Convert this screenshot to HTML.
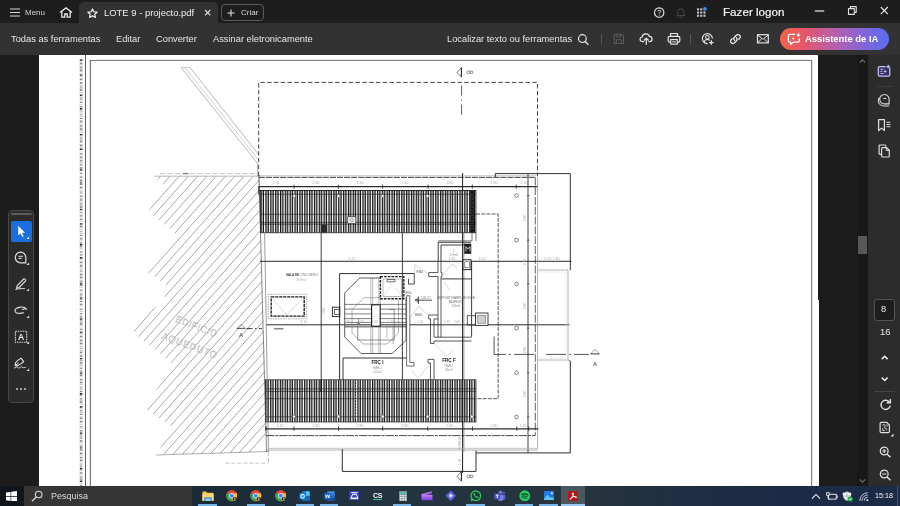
<!DOCTYPE html>
<html>
<head>
<meta charset="utf-8">
<title>LOTE 9 - projecto.pdf</title>
<style>
*{box-sizing:border-box;margin:0;padding:0}
html,body{width:900px;height:506px;overflow:hidden;background:#1c1c1c;font-family:"Liberation Sans",sans-serif;}
.abs{position:absolute}
#titlebar{position:absolute;left:0;top:0;width:900px;height:23px;background:#1d1d1d}
#tab{position:absolute;left:79px;top:2px;width:139px;height:22px;background:#323232;border-radius:5px 5px 0 0}
#toolbar{position:absolute;left:0;top:23px;width:900px;height:31.5px;background:#323232}
#toolshadow{display:none}
.t{position:absolute;color:#e6e6e6;white-space:nowrap;line-height:1;will-change:transform}
#page{position:absolute;left:38.5px;top:55px;width:779.2px;height:431px;background:#fff;overflow:hidden}
#scroll{position:absolute;left:857.400px;top:54.5px;width:10.600px;height:431.500px;background:#181818}
#thumb{position:absolute;left:858px;top:236px;width:9.400px;height:18.300px;background:#585858}
#rpanel{position:absolute;left:868px;top:54.5px;width:32px;height:431.500px;background:#2c2c2c}
#lpal{position:absolute;left:8.3px;top:209.600px;width:26px;height:193.400px;background:#2b2b2b;border:1px solid #474747;border-radius:4px}
#taskbar{position:absolute;left:0;top:486px;width:900px;height:20px;background:linear-gradient(90deg,#0f141b 0,#10161e 2.6%,#1c2a37 21.5%,#223240 40%,#26353d 64%,#1f2e42 76%,#1b2b47 88%,#1b2a46 100%)}
#search{position:absolute;left:24px;top:486px;width:168.300px;height:20px;background:#353535}
</style>
</head>
<body>
<div id="titlebar"></div>
<div id="tab"></div>
<div id="toolbar"></div>
<div id="toolshadow"></div>

<!-- title bar content -->
<svg class="abs" style="left:10px;top:8px" width="10" height="9" viewBox="0 0 10 9"><path d="M0 1h10M0 4.5h10M0 8h10" stroke="#d8d8d8" stroke-width="1.2"/></svg>
<div class="t" style="left:25px;top:8.5px;font-size:8px;color:#d2d2d2">Menu</div>
<svg class="abs" style="left:59px;top:7px" width="14" height="11" viewBox="0 0 14 11"><path d="M1 5.6 7 0.9l6 4.7M2.8 4.6v5.6h3V7h2.4v3.2h3V4.6" fill="none" stroke="#e8e8e8" stroke-width="1.3"/></svg>
<svg class="abs" style="left:87px;top:8px" width="11" height="10" viewBox="0 0 11 10"><path d="M5.5 0.9 6.9 3.8 10.1 4.2 7.8 6.3 8.4 9.4 5.5 7.9 2.6 9.4 3.2 6.3 0.9 4.2 4.1 3.8z" fill="none" stroke="#e8e8e8" stroke-width="1.2" stroke-linejoin="round"/></svg>
<div class="t" style="left:103.5px;top:7.5px;font-size:9.45px;color:#f0f0f0">LOTE 9 - projecto.pdf</div>
<svg class="abs" style="left:203.500px;top:9.300px" width="8" height="8" viewBox="0 0 8 8"><path d="M1 1l5.300 5.300M6.300 1l-5.300 5.300" stroke="#e0e0e0" stroke-width="1.100"/></svg>
<div class="abs" style="left:221px;top:4px;width:43px;height:17px;border:1px solid #5a5a5a;border-radius:4px;background:#1d1d1d"></div>
<svg class="abs" style="left:227px;top:8.5px" width="8" height="8" viewBox="0 0 8 8"><path d="M4 0.5v7M0.5 4h7" stroke="#e0e0e0" stroke-width="1.1"/></svg>
<div class="t" style="left:240.5px;top:8.5px;font-size:8px;color:#d8d8d8">Criar</div>
<div class="t" style="left:722.500px;top:5.900px;font-size:11.650px;color:#f2f2f2;-webkit-text-stroke:0.200px #f2f2f2">Fazer logon</div>

<!-- toolbar text -->
<div class="t" style="left:10.5px;top:34.8px;font-size:9.3px">Todas as ferramentas</div>
<div class="t" style="left:116px;top:34.8px;font-size:9.3px">Editar</div>
<div class="t" style="left:156px;top:34.8px;font-size:9.3px">Converter</div>
<div class="t" style="left:213px;top:34.8px;font-size:9.3px">Assinar eletronicamente</div>
<div class="t" style="left:446.5px;top:34.8px;font-size:9.3px">Localizar texto ou ferramentas</div>


<!-- title bar right -->
<svg class="abs" style="left:653px;top:7px" width="12" height="12" viewBox="0 0 12 12"><circle cx="6.2" cy="5.5" r="4.7" fill="none" stroke="#e4e4e4" stroke-width="1.15"/><path d="M4.9 4.5c0-1.7 2.7-1.7 2.7-.1 0 1-1.3 1-1.3 2.1" fill="none" stroke="#e4e4e4" stroke-width="1"/><circle cx="6.3" cy="8" r=".6" fill="#e4e4e4"/></svg>
<svg class="abs" style="left:675px;top:7px" width="12" height="12" viewBox="0 0 12 12"><path d="M2 8.6c1-1 1-2 1-3.6 0-2 1.300-3.300 2.900-3.300S8.800 3 8.800 5c0 1.600 0 2.600 1 3.600z" fill="none" stroke="#444444" stroke-width="1.1" stroke-linejoin="round"/><path d="M4.800 10.300h2.200" stroke="#444444" stroke-width="1.1"/></svg>
<svg class="abs" style="left:696px;top:7px" width="12" height="12" viewBox="0 0 12 12"><g fill="#c4c4c4"><rect x="1" y="1.300" width="2.100" height="2.100"/><rect x="4.200" y="1.300" width="2.100" height="2.100"/><rect x="1" y="4.500" width="2.100" height="2.100"/><rect x="4.200" y="4.500" width="2.100" height="2.100"/><rect x="7.400" y="4.500" width="2.100" height="2.100"/><rect x="1" y="7.700" width="2.100" height="2.100"/><rect x="4.200" y="7.700" width="2.100" height="2.100"/><rect x="7.400" y="7.700" width="2.100" height="2.100"/></g><circle cx="8.900" cy="1.900" r="1.900" fill="#3b8cf0"/></svg>
<svg class="abs" style="left:814px;top:9px" width="11" height="4" viewBox="0 0 11 4"><path d="M0.800 2h9.400" stroke="#e8e8e8" stroke-width="1.200"/></svg>
<svg class="abs" style="left:847px;top:5px" width="11" height="11" viewBox="0 0 11 11"><path d="M1.500 3.600h5.800v5.800h-5.800zM3.400 3.400v-1.800h5.800v5.800h-1.800" fill="none" stroke="#e0e0e0" stroke-width="1.100" stroke-linejoin="round"/></svg>
<svg class="abs" style="left:880px;top:6px" width="9" height="9" viewBox="0 0 9 9"><path d="M0.800 1l7 7.200M7.800 1l-7 7.200" stroke="#e8e8e8" stroke-width="1.150"/></svg>

<!-- toolbar right icons -->
<svg class="abs" style="left:577px;top:33px" width="13" height="13" viewBox="0 0 13 13"><circle cx="5.400" cy="5.600" r="3.900" fill="none" stroke="#e6e6e6" stroke-width="1.200"/><path d="M8.200 8.500l3.300 3.300" stroke="#e6e6e6" stroke-width="1.300"/></svg>
<div class="abs" style="left:601px;top:33.500px;width:1px;height:10px;background:#565656"></div>
<svg class="abs" style="left:613px;top:33px" width="12" height="12" viewBox="0 0 12 12"><path d="M1.200 1.200h7.300l2 2v7.300h-9.300z" fill="none" stroke="#5a5a5a" stroke-width="1.100" stroke-linejoin="round"/><path d="M3.300 1.400v2.600h4.200v-2.600M3.300 10.300v-3.600h5v3.600" fill="none" stroke="#5a5a5a" stroke-width="1"/></svg>
<svg class="abs" style="left:639px;top:32px" width="15" height="14" viewBox="0 0 15 14"><path d="M4.600 9.600h-1.200c-3.100-.2-3.100-4.300-.2-4.600.3-4 6.300-4.300 7.100-.7 3.600.1 3.600 5.100.3 5.300h-.6" fill="none" stroke="#e6e6e6" stroke-width="1.200" stroke-linecap="round"/><path d="M7.300 12.800v-6.300M4.900 8.500l2.400-2.400 2.400 2.400" fill="none" stroke="#e6e6e6" stroke-width="1.250"/></svg>
<svg class="abs" style="left:667px;top:32px" width="14" height="14" viewBox="0 0 14 14"><path d="M3.600 4.300v-2.800h6.800v2.800" fill="none" stroke="#e6e6e6" stroke-width="1.150"/><rect x="1.200" y="4.300" width="11.600" height="5.800" rx="1.300" fill="none" stroke="#e6e6e6" stroke-width="1.200"/><rect x="3.700" y="7.600" width="6.600" height="4.500" fill="#323232" stroke="#e6e6e6" stroke-width="1.150"/><path d="M5 9.900h4" stroke="#e6e6e6" stroke-width=".9"/></svg>
<div class="abs" style="left:690px;top:33.500px;width:1px;height:10px;background:#565656"></div>
<svg class="abs" style="left:701px;top:32px" width="14" height="14" viewBox="0 0 14 14"><path d="M11.400 6.600a5 5 0 1 0-4.800 5" fill="none" stroke="#e6e6e6" stroke-width="1.150"/><circle cx="6.400" cy="5.200" r="1.800" fill="none" stroke="#e6e6e6" stroke-width="1.050"/><path d="M3.300 10c.3-2 1.600-2.600 3.100-2.600 1 0 1.800.3 2.300.9" fill="none" stroke="#e6e6e6" stroke-width="1.050"/><path d="M10.300 8.300v4.400M8.100 10.500h4.400" stroke="#e6e6e6" stroke-width="1.250"/></svg>
<svg class="abs" style="left:729px;top:32px" width="13" height="14" viewBox="0 0 13 14"><g fill="none" stroke="#e6e6e6" stroke-width="1.300" stroke-linecap="round"><path d="M5.600 8.400c-1.300-1.300-.9-2.500 0-3.400l1.700-1.700c1-1 2.400-1 3.300-.1s.9 2.300-.1 3.300l-.9.900"/><path d="M7.300 5.600c1.300 1.300.9 2.500 0 3.400l-1.700 1.700c-1 1-2.400 1-3.300.1s-.9-2.300.1-3.300l.9-.9"/></g></svg>
<svg class="abs" style="left:756px;top:33px" width="14" height="12" viewBox="0 0 14 12"><rect x="1.500" y="1.700" width="10.800" height="8.200" fill="none" stroke="#e6e6e6" stroke-width="1.150"/><path d="M1.700 2l5.200 4.300 5.200-4.300M1.700 9.700l3.700-3.600M12.100 9.700l-3.700-3.600" fill="none" stroke="#e6e6e6" stroke-width="1"/></svg>
<div class="abs" style="left:780px;top:28px;width:109px;height:21.500px;border-radius:11px;background:linear-gradient(90deg,#f5634a 0%,#e4566a 22%,#b860ac 50%,#7f66dc 78%,#5a6cf2 100%)"></div>
<svg class="abs" style="left:787px;top:32px" width="15" height="14" viewBox="0 0 15 14"><path d="M8 2.400h-5.200c-.9 0-1.400.5-1.400 1.400v5c0 .9.500 1.400 1.400 1.400h.9v2.200l2.500-2.200h4.600c.9 0 1.400-.5 1.400-1.400v-2.500" fill="none" stroke="#fff" stroke-width="1.250" stroke-linejoin="round"/><path d="M11.400 0.600l.7 1.700 1.700.7-1.700.7-.7 1.700-.7-1.700-1.700-.7 1.700-.7z" fill="#fff"/><path d="M6.300 5l.5 1.100 1.100.5-1.100.5-.5 1.100-.5-1.100-1.100-.5 1.100-.5z" fill="#fff"/></svg>
<div class="t" style="left:804.700px;top:34.300px;font-size:9.450px;font-weight:bold;color:#fff">Assistente de IA</div>

<div id="page"></div>
<div class="abs" style="left:817px;top:300.200px;width:2px;height:185.800px;background:#fff"></div>
<!--DRAWING-START-->
<svg class="abs" style="left:0;top:0;will-change:transform" width="900" height="506" viewBox="0 0 900 506">
<defs>
<clipPath id="pgclip"><rect x="38.5" y="55" width="780.5" height="431"/></clipPath>
<pattern id="slat" width="4.85" height="10" patternUnits="userSpaceOnUse" x="260.6"><rect width="4.85" height="10" fill="#a2a2a2"/><rect x="0" width="1.15" height="10" fill="#111"/><rect x="2.5" width="0.5" height="10" fill="#3c3c3c"/><rect x="3.95" width="0.9" height="10" fill="#ececec"/></pattern>
<clipPath id="hclip"><path d="M154.5 176.5L164.0 185.0L148.5 211.5L176.0 234.0L144.5 269.5L168.0 286.0L163.0 302.0L133.0 323.0L134.0 333.0L173.0 364.0L144.5 408.0L173.0 427.5L156.0 455.0L268.0 451.5L258.3 176.5z"/></clipPath>
</defs>
<g clip-path="url(#pgclip)" fill="none" font-family="Liberation Sans, sans-serif">
<path d="M81.1 59.5L81.1 486.0" stroke="#cccccc" stroke-width="3.2" stroke-dasharray="1.300 0.800 0.900 1.200 1.700 0.700 0.600 1.500 2.100 0.900 1.100 1.300" />
<path d="M81.1 59.5L81.1 486.0" stroke="#8a8a8a" stroke-width="2.4" stroke-dasharray="0.900 2.300 1.300 3.100 0.800 1.900 1.500 4.300 0.700 2.700" />
<path d="M81.1 59.5L81.1 486.0" stroke="#333" stroke-width="2.4" stroke-dasharray="1.200 13.700 1.000 19.300 1.300 11.900 1.100 25.100" />
<path d="M85.5 55.0L85.5 486.0" stroke="#4a4a4a" stroke-width="0.9" />
<path d="M90.3 486.0L90.3 59.9" stroke="#4a4a4a" stroke-width="0.9" />
<path d="M89.9 60.4L812.1 60.4" stroke="#707070" stroke-width="1.0" />
<path d="M811.7 60.4L811.7 486.0" stroke="#5a5a5a" stroke-width="0.9" />
<path d="M85.5 60.4L90.3 60.4" stroke="#4a4a4a" stroke-width="0" />
<g clip-path="url(#hclip)">
<path d="M163.5 173.0L-138.6 513.2" stroke="#828282" stroke-width="0.7" />
<path d="M172.8 173.0L-129.3 513.2" stroke="#828282" stroke-width="0.7" />
<path d="M182.0 173.0L-120.0 513.2" stroke="#828282" stroke-width="0.7" />
<path d="M191.3 173.0L-110.8 513.2" stroke="#828282" stroke-width="0.7" />
<path d="M200.6 173.0L-101.5 513.2" stroke="#828282" stroke-width="0.7" />
<path d="M209.8 173.0L-92.3 513.2" stroke="#828282" stroke-width="0.7" />
<path d="M219.1 173.0L-83.0 513.2" stroke="#828282" stroke-width="0.7" />
<path d="M228.3 173.0L-73.7 513.2" stroke="#828282" stroke-width="0.7" />
<path d="M237.6 173.0L-64.5 513.2" stroke="#828282" stroke-width="0.7" />
<path d="M246.9 173.0L-55.2 513.2" stroke="#828282" stroke-width="0.7" />
<path d="M256.1 173.0L-46.0 513.2" stroke="#828282" stroke-width="0.7" />
<path d="M265.4 173.0L-36.7 513.2" stroke="#828282" stroke-width="0.7" />
<path d="M274.6 173.0L-27.4 513.2" stroke="#828282" stroke-width="0.7" />
<path d="M283.9 173.0L-18.2 513.2" stroke="#828282" stroke-width="0.7" />
<path d="M293.2 173.0L-8.9 513.2" stroke="#828282" stroke-width="0.7" />
<path d="M302.4 173.0L0.3 513.2" stroke="#828282" stroke-width="0.7" />
<path d="M311.7 173.0L9.6 513.2" stroke="#828282" stroke-width="0.7" />
<path d="M320.9 173.0L18.9 513.2" stroke="#828282" stroke-width="0.7" />
<path d="M330.2 173.0L28.1 513.2" stroke="#828282" stroke-width="0.7" />
<path d="M339.5 173.0L37.4 513.2" stroke="#828282" stroke-width="0.7" />
<path d="M348.7 173.0L46.6 513.2" stroke="#828282" stroke-width="0.7" />
<path d="M358.0 173.0L55.9 513.2" stroke="#828282" stroke-width="0.7" />
<path d="M367.2 173.0L65.2 513.2" stroke="#828282" stroke-width="0.7" />
<path d="M376.5 173.0L74.4 513.2" stroke="#828282" stroke-width="0.7" />
<path d="M385.8 173.0L83.7 513.2" stroke="#828282" stroke-width="0.7" />
<path d="M395.0 173.0L92.9 513.2" stroke="#828282" stroke-width="0.7" />
<path d="M404.3 173.0L102.2 513.2" stroke="#828282" stroke-width="0.7" />
<path d="M413.5 173.0L111.5 513.2" stroke="#828282" stroke-width="0.7" />
<path d="M422.8 173.0L120.7 513.2" stroke="#828282" stroke-width="0.7" />
<path d="M432.1 173.0L130.0 513.2" stroke="#828282" stroke-width="0.7" />
<path d="M441.3 173.0L139.2 513.2" stroke="#828282" stroke-width="0.7" />
<path d="M450.6 173.0L148.5 513.2" stroke="#828282" stroke-width="0.7" />
<path d="M459.8 173.0L157.8 513.2" stroke="#828282" stroke-width="0.7" />
<path d="M469.1 173.0L167.0 513.2" stroke="#828282" stroke-width="0.7" />
<path d="M478.4 173.0L176.3 513.2" stroke="#828282" stroke-width="0.7" />
<path d="M487.6 173.0L185.5 513.2" stroke="#828282" stroke-width="0.7" />
<path d="M496.9 173.0L194.8 513.2" stroke="#828282" stroke-width="0.7" />
</g>
<path d="M154.4 176.2L258.5 176.2" stroke="#9a9a9a" stroke-width="0.7" />
<path d="M160.0 173.6L258.0 173.6" stroke="#aaaaaa" stroke-width="0.7" stroke-dasharray="5 2.5" />
<rect x="183.0" y="172.9" width="5.5" height="1.3" fill="#808080" stroke="#888" stroke-width="0"/>
<path d="M156.0 455.0L268.0 451.5" stroke="#8a8a8a" stroke-width="0.7" />
<path d="M225.4 463.1L268.6 463.1" stroke="#aaa" stroke-width="0.7" stroke-dasharray="4 2" />
<path d="M268.6 452.0L268.6 463.1" stroke="#aaa" stroke-width="0.7" stroke-dasharray="4 2" />
<path d="M181.0 67.4L257.3 163.0" stroke="#9a9a9a" stroke-width="0.7" />
<path d="M184.5 67.4L258.7 160.0" stroke="#b8b8b8" stroke-width="0.6" />
<path d="M190.0 67.4L258.9 155.0" stroke="#9a9a9a" stroke-width="0.7" />
<path d="M181.0 67.4L190.0 67.4" stroke="#aaa" stroke-width="0.6" />
<path d="M257.4 163.0L257.4 176.0" stroke="#999" stroke-width="0.7" />
<g font-size="9.200" fill="none" stroke="#aaaaaa" stroke-width="0.380" letter-spacing="0.55">
<text x="175" y="321.500" transform="rotate(21 175 321.500)">EDIFICIO</text>
<text x="161.300" y="338.300" transform="rotate(20.500 161.300 338.300)" letter-spacing="0.85">AQUEDUTO</text>
</g>
<path d="M258.700 176V82.400H537.500V176" fill="none" stroke="#262626" stroke-width="0.85" stroke-dasharray="4.500 2.300"/>
<path d="M461.3 67.7L457.1 72.3L461.3 76.9z" fill="none" stroke="#333" stroke-width="0.7"/>
<path d="M461.5 67.5L461.5 77.1" stroke="#222" stroke-width="0.9" />
<ellipse cx="468.5" cy="72.3" rx="1.500" ry="1.400" stroke="#444" stroke-width="0.600"/>
<ellipse cx="471.5" cy="72.3" rx="1.500" ry="1.400" stroke="#444" stroke-width="0.600"/>
<path d="M461.3 471.8L457.1 476.4L461.3 481.0z" fill="none" stroke="#333" stroke-width="0.7"/>
<path d="M461.5 471.6L461.5 481.2" stroke="#222" stroke-width="0.9" />
<ellipse cx="468.5" cy="476.4" rx="1.500" ry="1.400" stroke="#444" stroke-width="0.600"/>
<ellipse cx="471.5" cy="476.4" rx="1.500" ry="1.400" stroke="#444" stroke-width="0.600"/>
<path d="M461.600 85.500V95.600M461.600 99.700V100.900M461.600 104.500V114.600" fill="none" stroke="#333" stroke-width="0.8"/>
<path d="M258.5 175.9L537.5 175.9" stroke="#8a8a8a" stroke-width="0.6" />
<path d="M258.9 177.4L535.3 177.4" stroke="#262626" stroke-width="0.85" stroke-dasharray="6 1.100" />
<path d="M535.3 177.4L535.3 435.5" stroke="#3a3a3a" stroke-width="0.8" stroke-dasharray="8 1.800" />
<path d="M258.5 186.7L537.8 186.7" stroke="#2c2c2c" stroke-width="1.25" />
<path d="M294.1 184.6L294.1 188.6" stroke="#222" stroke-width="0.8" />
<path d="M338.3 184.6L338.3 188.6" stroke="#222" stroke-width="0.8" />
<path d="M382.6 184.6L382.6 188.6" stroke="#222" stroke-width="0.8" />
<path d="M428.0 184.6L428.0 188.6" stroke="#222" stroke-width="0.8" />
<path d="M472.3 184.6L472.3 188.6" stroke="#222" stroke-width="0.8" />
<path d="M516.2 184.6L516.2 188.6" stroke="#222" stroke-width="0.8" />
<text x="276.0" y="184.3" font-size="3.6" fill="#a8a8a8" font-weight="normal" text-anchor="middle" >1.91</text>
<text x="316.0" y="184.3" font-size="3.6" fill="#a8a8a8" font-weight="normal" text-anchor="middle" >2.80</text>
<text x="360.0" y="184.3" font-size="3.6" fill="#a8a8a8" font-weight="normal" text-anchor="middle" >2.80</text>
<text x="405.0" y="184.3" font-size="3.6" fill="#a8a8a8" font-weight="normal" text-anchor="middle" >2.80</text>
<text x="450.0" y="184.3" font-size="3.6" fill="#a8a8a8" font-weight="normal" text-anchor="middle" >2.80</text>
<text x="494.0" y="184.3" font-size="3.6" fill="#a8a8a8" font-weight="normal" text-anchor="middle" >2.80</text>
<text x="524.0" y="184.3" font-size="3.6" fill="#a8a8a8" font-weight="normal" text-anchor="middle" >1.10</text>
<rect x="260.6" y="190.6" width="215.4" height="42.2" fill="#b2b2b2" stroke="#222" stroke-width="0"/>
<path d="M264.72 190.6V232.8M269.57 190.6V232.8M274.42 190.6V232.8M279.27 190.6V232.8M284.12 190.6V232.8M288.97 190.6V232.8M293.82 190.6V232.8M298.67 190.6V232.8M303.52 190.6V232.8M308.37 190.6V232.8M313.22 190.6V232.8M318.07 190.6V232.8M322.92 190.6V232.8M327.77 190.6V232.8M332.62 190.6V232.8M337.47 190.6V232.8M342.32 190.6V232.8M347.17 190.6V232.8M352.02 190.6V232.8M356.87 190.6V232.8M361.72 190.6V232.8M366.57 190.6V232.8M371.42 190.6V232.8M376.27 190.6V232.8M381.12 190.6V232.8M385.97 190.6V232.8M390.82 190.6V232.8M395.67 190.6V232.8M400.52 190.6V232.8M405.37 190.6V232.8M410.22 190.6V232.8M415.07 190.6V232.8M419.92 190.6V232.8M424.77 190.6V232.8M429.62 190.6V232.8M434.47 190.6V232.8M439.32 190.6V232.8M444.17 190.6V232.8M449.02 190.6V232.8M453.87 190.6V232.8M458.72 190.6V232.8M463.57 190.6V232.8M468.42 190.6V232.8M473.27 190.6V232.8" stroke="#f6f6f6" stroke-width="1.5"/>
<path d="M261.10 190.6V232.8M263.50 190.6V232.8M265.95 190.6V232.8M268.35 190.6V232.8M270.80 190.6V232.8M273.20 190.6V232.8M275.65 190.6V232.8M278.05 190.6V232.8M280.50 190.6V232.8M282.90 190.6V232.8M285.35 190.6V232.8M287.75 190.6V232.8M290.20 190.6V232.8M292.60 190.6V232.8M295.05 190.6V232.8M297.45 190.6V232.8M299.90 190.6V232.8M302.30 190.6V232.8M304.75 190.6V232.8M307.15 190.6V232.8M309.60 190.6V232.8M312.00 190.6V232.8M314.45 190.6V232.8M316.85 190.6V232.8M319.30 190.6V232.8M321.70 190.6V232.8M324.15 190.6V232.8M326.55 190.6V232.8M329.00 190.6V232.8M331.40 190.6V232.8M333.85 190.6V232.8M336.25 190.6V232.8M338.70 190.6V232.8M341.10 190.6V232.8M343.55 190.6V232.8M345.95 190.6V232.8M348.40 190.6V232.8M350.80 190.6V232.8M353.25 190.6V232.8M355.65 190.6V232.8M358.10 190.6V232.8M360.50 190.6V232.8M362.95 190.6V232.8M365.35 190.6V232.8M367.80 190.6V232.8M370.20 190.6V232.8M372.65 190.6V232.8M375.05 190.6V232.8M377.50 190.6V232.8M379.90 190.6V232.8M382.35 190.6V232.8M384.75 190.6V232.8M387.20 190.6V232.8M389.60 190.6V232.8M392.05 190.6V232.8M394.45 190.6V232.8M396.90 190.6V232.8M399.30 190.6V232.8M401.75 190.6V232.8M404.15 190.6V232.8M406.60 190.6V232.8M409.00 190.6V232.8M411.45 190.6V232.8M413.85 190.6V232.8M416.30 190.6V232.8M418.70 190.6V232.8M421.15 190.6V232.8M423.55 190.6V232.8M426.00 190.6V232.8M428.40 190.6V232.8M430.85 190.6V232.8M433.25 190.6V232.8M435.70 190.6V232.8M438.10 190.6V232.8M440.55 190.6V232.8M442.95 190.6V232.8M445.40 190.6V232.8M447.80 190.6V232.8M450.25 190.6V232.8M452.65 190.6V232.8M455.10 190.6V232.8M457.50 190.6V232.8M459.95 190.6V232.8M462.35 190.6V232.8M464.80 190.6V232.8M467.20 190.6V232.8M469.65 190.6V232.8M472.05 190.6V232.8M474.50 190.6V232.8" stroke="#141414" stroke-width="1.0"/>
<rect x="260.6" y="190.6" width="215.4" height="42.2" fill="none" stroke="#222" stroke-width="0.7"/>
<rect x="265.3" y="379.8" width="210.7" height="42.2" fill="#b2b2b2" stroke="#222" stroke-width="0"/>
<path d="M269.42 379.8V422.0M274.27 379.8V422.0M279.12 379.8V422.0M283.97 379.8V422.0M288.82 379.8V422.0M293.67 379.8V422.0M298.52 379.8V422.0M303.37 379.8V422.0M308.22 379.8V422.0M313.07 379.8V422.0M317.92 379.8V422.0M322.77 379.8V422.0M327.62 379.8V422.0M332.47 379.8V422.0M337.32 379.8V422.0M342.17 379.8V422.0M347.02 379.8V422.0M351.87 379.8V422.0M356.72 379.8V422.0M361.57 379.8V422.0M366.42 379.8V422.0M371.27 379.8V422.0M376.12 379.8V422.0M380.97 379.8V422.0M385.82 379.8V422.0M390.67 379.8V422.0M395.52 379.8V422.0M400.37 379.8V422.0M405.22 379.8V422.0M410.07 379.8V422.0M414.92 379.8V422.0M419.77 379.8V422.0M424.62 379.8V422.0M429.47 379.8V422.0M434.32 379.8V422.0M439.17 379.8V422.0M444.02 379.8V422.0M448.87 379.8V422.0M453.72 379.8V422.0M458.57 379.8V422.0M463.42 379.8V422.0M468.27 379.8V422.0M473.12 379.8V422.0" stroke="#f6f6f6" stroke-width="1.5"/>
<path d="M265.80 379.8V422.0M268.20 379.8V422.0M270.65 379.8V422.0M273.05 379.8V422.0M275.50 379.8V422.0M277.90 379.8V422.0M280.35 379.8V422.0M282.75 379.8V422.0M285.20 379.8V422.0M287.60 379.8V422.0M290.05 379.8V422.0M292.45 379.8V422.0M294.90 379.8V422.0M297.30 379.8V422.0M299.75 379.8V422.0M302.15 379.8V422.0M304.60 379.8V422.0M307.00 379.8V422.0M309.45 379.8V422.0M311.85 379.8V422.0M314.30 379.8V422.0M316.70 379.8V422.0M319.15 379.8V422.0M321.55 379.8V422.0M324.00 379.8V422.0M326.40 379.8V422.0M328.85 379.8V422.0M331.25 379.8V422.0M333.70 379.8V422.0M336.10 379.8V422.0M338.55 379.8V422.0M340.95 379.8V422.0M343.40 379.8V422.0M345.80 379.8V422.0M348.25 379.8V422.0M350.65 379.8V422.0M353.10 379.8V422.0M355.50 379.8V422.0M357.95 379.8V422.0M360.35 379.8V422.0M362.80 379.8V422.0M365.20 379.8V422.0M367.65 379.8V422.0M370.05 379.8V422.0M372.50 379.8V422.0M374.90 379.8V422.0M377.35 379.8V422.0M379.75 379.8V422.0M382.20 379.8V422.0M384.60 379.8V422.0M387.05 379.8V422.0M389.45 379.8V422.0M391.90 379.8V422.0M394.30 379.8V422.0M396.75 379.8V422.0M399.15 379.8V422.0M401.60 379.8V422.0M404.00 379.8V422.0M406.45 379.8V422.0M408.85 379.8V422.0M411.30 379.8V422.0M413.70 379.8V422.0M416.15 379.8V422.0M418.55 379.8V422.0M421.00 379.8V422.0M423.40 379.8V422.0M425.85 379.8V422.0M428.25 379.8V422.0M430.70 379.8V422.0M433.10 379.8V422.0M435.55 379.8V422.0M437.95 379.8V422.0M440.40 379.8V422.0M442.80 379.8V422.0M445.25 379.8V422.0M447.65 379.8V422.0M450.10 379.8V422.0M452.50 379.8V422.0M454.95 379.8V422.0M457.35 379.8V422.0M459.80 379.8V422.0M462.20 379.8V422.0M464.65 379.8V422.0M467.05 379.8V422.0M469.50 379.8V422.0M471.90 379.8V422.0M474.35 379.8V422.0" stroke="#141414" stroke-width="1.0"/>
<rect x="265.3" y="379.8" width="210.7" height="42.2" fill="none" stroke="#222" stroke-width="0.7"/>
<path d="M260.6 194.2L476.0 194.2" stroke="#1a1a1a" stroke-width="0.6" />
<path d="M260.6 214.3L476.0 214.3" stroke="#1a1a1a" stroke-width="0.6" />
<path d="M260.6 222.4L476.0 222.4" stroke="#1a1a1a" stroke-width="0.6" />
<path d="M260.6 224.2L476.0 224.2" stroke="#1a1a1a" stroke-width="0.6" />
<path d="M265.3 388.8L476.0 388.8" stroke="#1a1a1a" stroke-width="0.6" />
<path d="M265.3 391.4L476.0 391.4" stroke="#1a1a1a" stroke-width="0.6" />
<path d="M265.3 398.7L476.0 398.7" stroke="#1a1a1a" stroke-width="0.6" />
<path d="M265.3 416.8L476.0 416.8" stroke="#1a1a1a" stroke-width="0.6" />
<path d="M258.5 190.6L476.0 190.6" stroke="#1a1a1a" stroke-width="0.8" />
<circle cx="294.1" cy="196.0" r="1.5" fill="#fff" stroke="#333" stroke-width="0.4"/>
<circle cx="338.5" cy="196.0" r="1.5" fill="#fff" stroke="#333" stroke-width="0.4"/>
<circle cx="382.6" cy="196.0" r="1.5" fill="#fff" stroke="#333" stroke-width="0.4"/>
<circle cx="427.5" cy="196.0" r="1.5" fill="#fff" stroke="#333" stroke-width="0.4"/>
<circle cx="471.5" cy="196.0" r="1.5" fill="#fff" stroke="#333" stroke-width="0.4"/>
<circle cx="294.0" cy="416.5" r="1.5" fill="#fff" stroke="#333" stroke-width="0.4"/>
<circle cx="338.5" cy="416.5" r="1.5" fill="#fff" stroke="#333" stroke-width="0.4"/>
<circle cx="382.7" cy="416.5" r="1.5" fill="#fff" stroke="#333" stroke-width="0.4"/>
<circle cx="427.5" cy="416.5" r="1.5" fill="#fff" stroke="#333" stroke-width="0.4"/>
<circle cx="471.8" cy="416.5" r="1.5" fill="#fff" stroke="#333" stroke-width="0.4"/>
<rect x="320.8" y="224.6" width="6.5" height="8.0" fill="#2a2a2a" stroke="#111" stroke-width="0"/>
<rect x="347.8" y="216.8" width="8.0" height="6.8" fill="#f2f2f2" stroke="#222" stroke-width="0.6"/>
<circle cx="351.8" cy="220.3" r="1.6" fill="#fff" stroke="#333" stroke-width="0.5"/>
<path d="M472 232.800V240.900H438.200M476 232.800V240.900" fill="none" stroke="#333" stroke-width="0.7"/>
<path d="M472.1 191.0L472.1 232.5" stroke="#111" stroke-width="3.6" />
<path d="M472.1 194.0L472.1 230.0" stroke="#ddd" stroke-width="0.45" stroke-dasharray="1 1.600" />
<path d="M258.9 175.0L260.5 233.0" stroke="#333" stroke-width="0.8" />
<path d="M260.5 233.0L266.5 452.0" stroke="#555" stroke-width="0.7" />
<path d="M264.6 233.0L268.5 452.0" stroke="#666" stroke-width="0.65" />
<path d="M258.9 186.7L258.9 195.0" stroke="#222" stroke-width="1" />
<path d="M260.0 261.3L571.5 261.3" stroke="#1e1e1e" stroke-width="0.95" />
<path d="M266.5 324.8L569.6 324.8" stroke="#1e1e1e" stroke-width="0.95" />
<path d="M345.0 326.7L406.0 326.7" stroke="#8a8a8a" stroke-width="1.8" />
<path d="M321.2 232.8L321.2 379.8" stroke="#2a2a2a" stroke-width="0.9" />
<path d="M402.4 232.8L402.4 379.8" stroke="#2a2a2a" stroke-width="0.9" />
<path d="M462.6 173.0L462.6 472.8" stroke="#1e1e1e" stroke-width="1.0" />
<path d="M463.9 232.0L463.9 452.0" stroke="#555" stroke-width="0.6" />
<path d="M495.300 177V173.600H570.300V270.300" fill="none" stroke="#262626" stroke-width="0.95"/>
<path d="M528.0 173.6L528.0 452.5" stroke="#2a2a2a" stroke-width="0.9" />
<path d="M537.6 177.0L537.6 449.0" stroke="#9a9a9a" stroke-width="0.8" />
<path d="M476 214H498.200V398.700H476" fill="none" stroke="#303030" stroke-width="0.8" stroke-dasharray="4 1.200"/>
<circle cx="516.5" cy="195.6" r="1.8" fill="#fff" stroke="#333" stroke-width="0.6"/>
<circle cx="516.5" cy="240.1" r="1.8" fill="#fff" stroke="#333" stroke-width="0.6"/>
<circle cx="516.5" cy="283.9" r="1.8" fill="#fff" stroke="#333" stroke-width="0.6"/>
<circle cx="516.5" cy="328.1" r="1.8" fill="#fff" stroke="#333" stroke-width="0.6"/>
<circle cx="516.5" cy="372.7" r="1.8" fill="#fff" stroke="#333" stroke-width="0.6"/>
<circle cx="516.5" cy="417.0" r="1.8" fill="#fff" stroke="#333" stroke-width="0.6"/>
<path d="M527.0 195.6L529.5 195.6" stroke="#333" stroke-width="0.7" />
<path d="M527.0 240.1L529.5 240.1" stroke="#333" stroke-width="0.7" />
<path d="M527.0 283.9L529.5 283.9" stroke="#333" stroke-width="0.7" />
<path d="M527.0 328.1L529.5 328.1" stroke="#333" stroke-width="0.7" />
<path d="M527.0 372.7L529.5 372.7" stroke="#333" stroke-width="0.7" />
<path d="M527.0 417.0L529.5 417.0" stroke="#333" stroke-width="0.7" />
<text x="525.5" y="218.0" font-size="3.4" fill="#aaa" font-weight="normal" text-anchor="middle" transform="rotate(-90 525.5 218.0)" >2.80</text>
<text x="525.5" y="262.0" font-size="3.4" fill="#aaa" font-weight="normal" text-anchor="middle" transform="rotate(-90 525.5 262.0)" >2.80</text>
<text x="525.5" y="306.0" font-size="3.4" fill="#aaa" font-weight="normal" text-anchor="middle" transform="rotate(-90 525.5 306.0)" >2.80</text>
<text x="525.5" y="350.0" font-size="3.4" fill="#aaa" font-weight="normal" text-anchor="middle" transform="rotate(-90 525.5 350.0)" >2.80</text>
<text x="525.5" y="394.0" font-size="3.4" fill="#aaa" font-weight="normal" text-anchor="middle" transform="rotate(-90 525.5 394.0)" >2.80</text>
<text x="452.0" y="259.6" font-size="3.6" fill="#a8a8a8" font-weight="normal" text-anchor="middle" >1.65</text>
<text x="482.0" y="259.6" font-size="3.6" fill="#a8a8a8" font-weight="normal" text-anchor="middle" >3.20</text>
<text x="548.0" y="259.6" font-size="3.6" fill="#a8a8a8" font-weight="normal" text-anchor="middle" >0.20</text>
<text x="556.0" y="259.6" font-size="3.6" fill="#a8a8a8" font-weight="normal" text-anchor="middle" >1.80</text>
<text x="352.0" y="259.6" font-size="3.6" fill="#a8a8a8" font-weight="normal" text-anchor="middle" >6.25</text>
<path d="M537.600 270H568V360H537.600" fill="none" stroke="#b4b4b4" stroke-width="1.0"/>
<path d="M537.600 272H566V358H537.600" fill="none" stroke="#d8d8d8" stroke-width="0.5"/>
<path d="M570.300 360.800V452.900H476" fill="none" stroke="#222" stroke-width="0.95"/>
<path d="M568.0 360.0L570.3 360.8" stroke="#666" stroke-width="0.7" />
<path d="M265.0 428.8L538.4 428.8" stroke="#2c2c2c" stroke-width="1.25" />
<path d="M294.0 426.4L294.0 430.8" stroke="#222" stroke-width="0.8" />
<path d="M338.5 426.4L338.5 430.8" stroke="#222" stroke-width="0.8" />
<path d="M382.7 426.4L382.7 430.8" stroke="#222" stroke-width="0.8" />
<path d="M427.7 426.4L427.7 430.8" stroke="#222" stroke-width="0.8" />
<path d="M472.5 426.4L472.5 430.8" stroke="#222" stroke-width="0.8" />
<path d="M516.8 426.4L516.8 430.8" stroke="#222" stroke-width="0.8" />
<path d="M528.7 426.4L528.7 430.8" stroke="#222" stroke-width="0.8" />
<path d="M266.0 426.0L266.0 431.0" stroke="#222" stroke-width="0.9" />
<text x="280.0" y="426.6" font-size="3.6" fill="#a8a8a8" font-weight="normal" text-anchor="middle" >1.42</text>
<text x="316.0" y="426.6" font-size="3.6" fill="#a8a8a8" font-weight="normal" text-anchor="middle" >2.80</text>
<text x="360.0" y="426.6" font-size="3.6" fill="#a8a8a8" font-weight="normal" text-anchor="middle" >2.80</text>
<text x="405.0" y="426.6" font-size="3.6" fill="#a8a8a8" font-weight="normal" text-anchor="middle" >2.80</text>
<text x="450.0" y="426.6" font-size="3.6" fill="#a8a8a8" font-weight="normal" text-anchor="middle" >2.80</text>
<text x="494.0" y="426.6" font-size="3.6" fill="#a8a8a8" font-weight="normal" text-anchor="middle" >2.80</text>
<text x="523.0" y="426.6" font-size="3.6" fill="#a8a8a8" font-weight="normal" text-anchor="middle" >1.10</text>
<path d="M266.0 435.6L535.3 435.6" stroke="#262626" stroke-width="0.85" stroke-dasharray="8.300 1 3 1" />
<path d="M268.3 437.0L268.3 448.3" stroke="#b0b0b0" stroke-width="0.7" />
<path d="M268.3 448.3L537.0 448.3" stroke="#b4b4b4" stroke-width="0.8" />
<path d="M267.0 450.0L537.6 450.0" stroke="#9a9a9a" stroke-width="0.8" />
<path d="M342.300 449.300V471.400H476V450.700" fill="none" stroke="#222" stroke-width="0.95"/>
<text x="460.8" y="446.0" font-size="3.2" fill="#aaa" font-weight="normal" text-anchor="middle" transform="rotate(-90 460.8 446.0)" >0.20</text>
<text x="460.8" y="440.0" font-size="3.2" fill="#aaa" font-weight="normal" text-anchor="middle" transform="rotate(-90 460.8 440.0)" >0.60</text>
<text x="460.8" y="462.0" font-size="3.2" fill="#aaa" font-weight="normal" text-anchor="middle" transform="rotate(-90 460.8 462.0)" >1.10</text>
<path d="M241 324.400L237 328.300H245z" fill="none" stroke="#555" stroke-width="0.6"/>
<path d="M236.5 328.6L245.5 328.6" stroke="#444" stroke-width="0.7" />
<text x="241.0" y="337.2" font-size="6" fill="#333" font-weight="normal" text-anchor="middle" >A</text>
<path d="M246.500 328.600H252.500M255 328.600H256.500M259 328.600H262" fill="none" stroke="#262626" stroke-width="0.9"/>
<path d="M274.0 328.7L283.5 328.7" stroke="#8a8a8a" stroke-width="1.6" />
<path d="M494.100 336.400V354.400H506M509 354.400H511M514 354.400H534M546 354.400H566M569 354.400H571M574 354.400H589" fill="none" stroke="#2a2a2a" stroke-width="0.8"/>
<path d="M494.1 336.4L494.1 340.0" stroke="#fff" stroke-width="0" />
<path d="M595 349.500L590.800 353.600H599.200z" fill="none" stroke="#555" stroke-width="0.6"/>
<path d="M590.3 354.0L599.7 354.0" stroke="#444" stroke-width="0.7" />
<text x="595.0" y="366.4" font-size="6" fill="#333" font-weight="normal" text-anchor="middle" >A</text>
<text x="286.0" y="276.2" font-size="3" fill="#444" font-weight="bold" text-anchor="start" >SALA DE</text>
<text x="298.6" y="276.2" font-size="3" fill="#888" font-weight="normal" text-anchor="start" >CONDOMÍNIO</text>
<text x="296.5" y="281.0" font-size="2.9" fill="#aaa" font-weight="normal" text-anchor="start" >18.9m2</text>
<rect x="268.3" y="294.2" width="38.3" height="24.6" fill="none" stroke="#8a8a8a" stroke-width="0.7" stroke-dasharray="1.600 0.900"/>
<rect x="271.2" y="296.8" width="33.0" height="19.4" fill="none" stroke="#1c1c1c" stroke-width="1.35" stroke-dasharray="3.200 0.800"/>
<path d="M272.500 298.500L286.500 314.800L302.800 298.500" fill="none" stroke="#b4b4b4" stroke-width="0.5"/>
<text x="303.7" y="322.6" font-size="3.6" fill="#a8a8a8" font-weight="normal" text-anchor="middle" >3.10</text>
<text x="325.0" y="311.0" font-size="3.2" fill="#aaa" font-weight="normal" text-anchor="middle" transform="rotate(-90 325.0 311.0)" >6.05</text>
<path d="M339.600 379.800V273.600H414.300V278.700" fill="none" stroke="#222" stroke-width="0.95"/>
<rect x="332.4" y="307.2" width="7.4" height="9.4" fill="none" stroke="#222" stroke-width="0.9"/>
<rect x="334.6" y="309.4" width="4.6" height="5.0" fill="none" stroke="#333" stroke-width="0.7"/>
<path d="M359.700 278H379.800M359.700 278L344.700 293V337L361 353.500H392.200L406 340.400V297.700" fill="none" stroke="#333" stroke-width="0.8"/>
<path d="M364 297.700H380M364 297.700L352 309.500V333L363 344H387L398.500 333V300" fill="none" stroke="#777" stroke-width="0.55"/>
<path d="M370.800 278V304.800M372.600 278V304.800M378.800 278V304.800M380.400 299V304.800M370.800 326.200V353.500M372.600 326.200V353.500M378.800 326.200V353.500M380.400 326.200V353.500" fill="none" stroke="#777" stroke-width="0.5"/>
<rect x="380.4" y="276.6" width="23.4" height="22.2" fill="none" stroke="#1c1c1c" stroke-width="1.4" stroke-dasharray="2.600 1.100"/>
<rect x="383.0" y="279.0" width="18.5" height="17.5" fill="none" stroke="#777" stroke-width="0.5"/>
<path d="M387 279.500h8v2.300h-8z" fill="none" stroke="#333" stroke-width="0.7"/>
<path d="M383.500 296L392 284M401 296L396 288" fill="none" stroke="#bbb" stroke-width="0.45"/>
<path d="M344.7 304.4L406.0 304.4" stroke="#3a3a3a" stroke-width="0.65" />
<path d="M344.7 309.1L406.0 309.1" stroke="#3a3a3a" stroke-width="0.65" />
<path d="M344.7 313.9L406.0 313.9" stroke="#3a3a3a" stroke-width="0.65" />
<path d="M344.7 318.6L406.0 318.6" stroke="#3a3a3a" stroke-width="0.65" />
<path d="M344.7 322.4L406.0 322.4" stroke="#3a3a3a" stroke-width="0.65" />
<rect x="371.6" y="304.8" width="8.6" height="21.4" fill="#fff" stroke="#1c1c1c" stroke-width="1.1"/>
<path d="M357.700 326.500V340H394.200V309.500H389.500" fill="none" stroke="#555" stroke-width="0.65"/>
<path d="M356 322l2.500 2.500 2.500-2.500M358.500 319v5.500" fill="none" stroke="#444" stroke-width="0.6"/>
<path d="M393 326.500V344M387 326.500V338" fill="none" stroke="#777" stroke-width="0.5"/>
<path d="M406.600 295.700V366H414V362.400H409.800V295.700z" fill="#fff" stroke="#222" stroke-width="0.65"/>
<path d="M408.500 278.700V284H414.300V278.700" fill="none" stroke="#222" stroke-width="0.8"/>
<path d="M438 261.300V272.600H428.700V276.500H438V337.200M441 261.300V272.600H442V276.500H441V337.200" fill="none" stroke="#222" stroke-width="0.75"/>
<path d="M438 315H428.700V318.900H430.500V337.200M438 318.900H434V337.200" fill="none" stroke="#222" stroke-width="0.75"/>
<path d="M430.500 337.200V343.500H434V341H471.600M434 337.200H471.600" fill="none" stroke="#222" stroke-width="0.75"/>
<path d="M441 278.900H471.600" fill="none" stroke="#222" stroke-width="0.9"/>
<path d="M471.6 261.3L471.6 336.8" stroke="#222" stroke-width="0.9" />
<text x="456.0" y="298.6" font-size="3.1" fill="#666" font-weight="normal" text-anchor="middle" >DEPÓSITO/ARRUMOS DE</text>
<text x="456.0" y="302.6" font-size="3.1" fill="#555" font-weight="normal" text-anchor="middle" >EDIFÍCIO</text>
<text x="456.0" y="306.8" font-size="3.1" fill="#888" font-weight="normal" text-anchor="middle" >3.8m2</text>
<path d="M471 242.300H438.200V261.300M471 245H441V261.300" fill="none" stroke="#222" stroke-width="0.85"/>
<text x="454.0" y="251.5" font-size="3.4" fill="#444" font-weight="normal" text-anchor="middle" >I</text>
<text x="454.0" y="256.0" font-size="3.1" fill="#888" font-weight="normal" text-anchor="middle" >2.9m2</text>
<rect x="464.6" y="244.0" width="6.4" height="9.6" fill="#1a1a1a" stroke="#111" stroke-width="0.5"/>
<path d="M466 251.500v-5l2 2.500 2-2.500v5" fill="none" stroke="#fff" stroke-width="0.7"/>
<rect x="463.0" y="259.8" width="8.0" height="9.8" fill="#fff" stroke="#222" stroke-width="1.0"/>
<rect x="464.8" y="261.8" width="4.5" height="6.0" fill="none" stroke="#444" stroke-width="0.6"/>
<rect x="475.6" y="313.0" width="12.4" height="12.4" fill="#fff" stroke="#222" stroke-width="0.85"/>
<rect x="477.8" y="315.2" width="8.0" height="8.0" fill="#cfcfcf" stroke="#555" stroke-width="0.5"/>
<rect x="467.3" y="315.7" width="8.3" height="9.3" fill="none" stroke="#333" stroke-width="0.8"/>
<path d="M414.300 279L415 264.600L429.600 275" fill="none" stroke="#aaa" stroke-width="0.5"/>
<path d="M442 276L452 264L457 268" fill="none" stroke="#aaa" stroke-width="0.5"/>
<path d="M409.800 318L418.500 306L428.700 316" fill="none" stroke="#aaa" stroke-width="0.5"/>
<path d="M444 282L450 290" fill="none" stroke="#aaa" stroke-width="0.5"/>
<text x="416.5" y="273.4" font-size="3.2" fill="#444" font-weight="normal" text-anchor="start" >EI60</text>
<text x="405.5" y="294.3" font-size="2.8" fill="#555" font-weight="normal" text-anchor="start" >EI60</text>
<text x="415.2" y="315.6" font-size="3.2" fill="#444" font-weight="normal" text-anchor="start" >EI60</text>
<path d="M415 300.200H432M418.400 296.500V304M415 300.200L418.400 298.500M416.500 302L418.400 300.200" fill="none" stroke="#222" stroke-width="0.8"/>
<text x="421.0" y="299.2" font-size="3.2" fill="#888" font-weight="normal" text-anchor="start" >138.22</text>
<text x="347.0" y="323.4" font-size="3.2" fill="#a8a8a8" font-weight="normal" text-anchor="middle" >1.35</text>
<text x="361.0" y="323.4" font-size="3.2" fill="#a8a8a8" font-weight="normal" text-anchor="middle" >1.20</text>
<text x="375.0" y="323.4" font-size="3.2" fill="#a8a8a8" font-weight="normal" text-anchor="middle" >0.25</text>
<text x="391.0" y="323.4" font-size="3.2" fill="#a8a8a8" font-weight="normal" text-anchor="middle" >1.20</text>
<text x="420.0" y="323.4" font-size="3.2" fill="#a8a8a8" font-weight="normal" text-anchor="middle" >1.10</text>
<text x="447.0" y="323.4" font-size="3.2" fill="#a8a8a8" font-weight="normal" text-anchor="middle" >1.75</text>
<text x="457.0" y="323.4" font-size="3.2" fill="#a8a8a8" font-weight="normal" text-anchor="middle" >1.65</text>
<text x="595.2" y="0.0" font-size="1" fill="#9a9a9a" font-weight="normal" text-anchor="start" ></text>
<path d="M343 379.800V358H406.600" fill="none" stroke="#222" stroke-width="0.9"/>
<text x="377.5" y="364.2" font-size="4.6" fill="#222" font-weight="bold" text-anchor="middle" >FRÇ I</text>
<text x="377.5" y="368.6" font-size="3.1" fill="#999" font-weight="normal" text-anchor="middle" >HAB.2</text>
<text x="377.5" y="372.8" font-size="3.1" fill="#999" font-weight="normal" text-anchor="middle" >112m2</text>
<text x="449.0" y="362.4" font-size="4.6" fill="#222" font-weight="bold" text-anchor="middle" >FRÇ F</text>
<text x="449.0" y="366.8" font-size="3.1" fill="#999" font-weight="normal" text-anchor="middle" >HAB.1</text>
<text x="449.0" y="371.0" font-size="3.1" fill="#999" font-weight="normal" text-anchor="middle" >84m2</text>
<path d="M434 379.800V359.400H428V363H430.500V379.800" fill="none" stroke="#222" stroke-width="0.75"/>
<path d="M430 364L418 378L412 371" fill="none" stroke="#aaa" stroke-width="0.5"/>
<path d="M434 343.500L447 356L452 351" fill="none" stroke="#bbb" stroke-width="0.5"/>
<path d="M321.2 379.8L321.2 392.0" stroke="#111" stroke-width="1.6" />
<path d="M355.5 381.0L355.5 420.0" stroke="#ddd" stroke-width="0.5" stroke-dasharray="1.500 1.500" />
</g>
</svg>
<!--DRAWING-END-->
<div id="scroll"></div>
<div id="thumb"></div>
<div id="rpanel"></div>
<div id="lpal"></div>

<!-- left palette contents -->
<div class="abs" style="left:11px;top:213px;width:20.500px;height:2px;background:#5c5c5c;border-radius:1px"></div>
<div class="abs" style="left:10.900px;top:220.600px;width:21.300px;height:21.100px;background:#1a6fe0;border-radius:2px"></div>
<svg class="abs" style="left:17px;top:225px" width="9" height="13" viewBox="0 0 9 13"><path d="M1.200 0.800v9.600l2.300-2.100 1.700 3.700 1.500-.7-1.700-3.600h3.100z" fill="#fff"/></svg>
<svg class="abs" style="left:26px;top:236.300px" width="4" height="4" viewBox="0 0 4 4"><path d="M3.100 0.400v2.700h-2.700z" fill="#fff"/></svg>
<svg class="abs" style="left:14px;top:251px" width="14" height="14" viewBox="0 0 14 14"><path d="M6.600 1.200a5.300 5.300 0 1 0 0 10.600h5.200v-5.300a5.300 5.300 0 0 0-5.200-5.300z" fill="none" stroke="#dcdcdc" stroke-width="1.200"/><path d="M4.400 5.300h4.600M4.400 7.400h3.400" stroke="#dcdcdc" stroke-width="1"/></svg>
<svg class="abs" style="left:26px;top:262.0px" width="4" height="4" viewBox="0 0 4 4"><path d="M3.100 0.400v2.700h-2.700z" fill="#d8d8d8"/></svg>
<svg class="abs" style="left:14px;top:277px" width="15" height="14" viewBox="0 0 15 14"><path d="M3.300 8.600l6.400-6.600c.8-.8 2.700 1 1.900 1.900l-6.400 6.600-2.700.8z" fill="none" stroke="#dcdcdc" stroke-width="1.150" stroke-linejoin="round"/><path d="M1.300 12.600c2.800-.9 6-1.300 9.800-.9" fill="none" stroke="#dcdcdc" stroke-width="1"/></svg>
<svg class="abs" style="left:26px;top:288.0px" width="4" height="4" viewBox="0 0 4 4"><path d="M3.100 0.400v2.700h-2.700z" fill="#d8d8d8"/></svg>
<svg class="abs" style="left:14px;top:305px" width="14" height="11" viewBox="0 0 14 11"><path d="M8.400 4.500c1.500-1.100 4.100-.9 4 .4-.1-2.100-2.800-3.200-5.800-2.800-3.400.4-5.700 2-5.600 3.600.1 1.700 2.600 2.700 5 2.600 1.500 0 2.700-.2 3.600-.5" fill="none" stroke="#dcdcdc" stroke-width="1.150" stroke-linecap="round"/></svg>
<svg class="abs" style="left:26px;top:314.5px" width="4" height="4" viewBox="0 0 4 4"><path d="M3.100 0.400v2.700h-2.700z" fill="#d8d8d8"/></svg>
<svg class="abs" style="left:14px;top:330px" width="14" height="14" viewBox="0 0 14 14"><rect x="1.400" y="1.200" width="11.300" height="11" fill="none" stroke="#dcdcdc" stroke-width="1.150" stroke-dasharray="1.500 0.850"/></svg>
<div class="t" style="left:18.100px;top:332.700px;font-size:8.600px;font-weight:bold;color:#e6e6e6">A</div>
<svg class="abs" style="left:26px;top:341.0px" width="4" height="4" viewBox="0 0 4 4"><path d="M3.100 0.400v2.700h-2.700z" fill="#d8d8d8"/></svg>
<svg class="abs" style="left:13px;top:357px" width="15" height="13" viewBox="0 0 15 13"><path d="M2.200 8.500c-.3-2.300.9-3.900 2.600-5.100l3.300-2.300 2.600 3.700-3.300 2.300c-1.700 1.200-3.500 1.900-5.200 1.400z" fill="none" stroke="#dcdcdc" stroke-width="1.150" stroke-linejoin="round"/><path d="M2.200 8.500l3.500-2.700M1 11.500c1.300-1.500 2.800-2 3.700-1.300.7.600 1.200 1.300 2.300.4.800-.7 1.600-1.400 2.300-.5.500.7 1.500.7 3.600.2" fill="none" stroke="#dcdcdc" stroke-width="1"/></svg>
<svg class="abs" style="left:26px;top:367.5px" width="4" height="4" viewBox="0 0 4 4"><path d="M3.100 0.400v2.700h-2.700z" fill="#d8d8d8"/></svg>
<div class="abs" style="left:16.200px;top:388.200px;width:1.500px;height:1.500px;background:#a0a0a0"></div>
<div class="abs" style="left:20.200px;top:388.200px;width:1.500px;height:1.500px;background:#a0a0a0"></div>
<div class="abs" style="left:24.200px;top:388.200px;width:1.500px;height:1.500px;background:#a0a0a0"></div>

<!-- scrollbar arrows -->
<svg class="abs" style="left:859px;top:58px" width="7" height="6" viewBox="0 0 7 6"><path d="M0.800 4.500l2.700-2.700 2.700 2.700" fill="none" stroke="#6c6c6c" stroke-width="1.200"/></svg>
<svg class="abs" style="left:859px;top:478px" width="7" height="6" viewBox="0 0 7 6"><path d="M0.800 1.500l2.700 2.700 2.700-2.700" fill="none" stroke="#6c6c6c" stroke-width="1.200"/></svg>

<!-- right panel contents -->
<svg class="abs" style="left:877px;top:64px" width="14" height="14" viewBox="0 0 14 14"><rect x="1.300" y="2.700" width="11.500" height="9.400" rx="1.400" fill="#36345c" stroke="#c4befa" stroke-width="1.250"/><path d="M3.400 5.300h3M3.400 7.400h2M3.400 9.500h3M6.700 7.400h2.800M8.100 6v2.800" fill="none" stroke="#c4befa" stroke-width=".95"/><path d="M11.200 -0.200l.8 2 2 .8-2 .8-.8 2-.8-2-2-.8 2-.8z" fill="#d2ccff" stroke="#2c2c2c" stroke-width=".5"/></svg>
<div class="abs" style="left:876.500px;top:85.500px;width:15.500px;height:1px;background:#3c3c3c"></div>
<svg class="abs" style="left:877px;top:93px" width="14" height="15" viewBox="0 0 14 15"><path d="M7.400 1.500a4.700 4.700 0 0 0 0 9.400h4.700v-4.700a4.700 4.700 0 0 0-4.700-4.700z" fill="none" stroke="#dcdcdc" stroke-width="1.100"/><path d="M2.500 4.300c-2 2.200-1.600 6.400 1.800 8.100 1 .5 2 .6 3.300.6h4.500" fill="none" stroke="#dcdcdc" stroke-width="1.050"/><path d="M6.300 5.500h3" stroke="#dcdcdc" stroke-width="1"/></svg>
<svg class="abs" style="left:877px;top:118px" width="15" height="15" viewBox="0 0 15 15"><path d="M1.600 1.600h5.800v11l-2.900-2.500-2.900 2.500z" fill="none" stroke="#dcdcdc" stroke-width="1.250" stroke-linejoin="round"/><path d="M9.400 4.300h4M9.400 6.500h4M9.400 8.700h4" stroke="#dcdcdc" stroke-width="1"/></svg>
<svg class="abs" style="left:878px;top:144px" width="13" height="14" viewBox="0 0 13 14"><path d="M3.600 10.300h-1.500c-.7 0-1-.3-1-1v-7.300c0-.7.300-1 1-1h4.800c.7 0 1 .3 1 1v.8" fill="none" stroke="#dcdcdc" stroke-width="1.200"/><path d="M4.600 3.700h4l2.700 2.600v5.700c0 .7-.3 1-1 1h-5.700c-.7 0-1-.3-1-1v-7.300c0-.7.300-1 1-1z" fill="none" stroke="#dcdcdc" stroke-width="1.200"/><path d="M8.400 3.900v2.600h2.700" fill="none" stroke="#dcdcdc" stroke-width="1"/></svg>

<div class="abs" style="left:873.500px;top:299px;width:21.300px;height:22px;background:#1d1d1d;border:1px solid #545454;border-radius:3px"></div>
<div class="t" style="left:881.400px;top:304.300px;font-size:9.400px;color:#e8e8e8">8</div>
<div class="t" style="left:879.700px;top:327.300px;font-size:9.400px;color:#e8e8e8">16</div>
<svg class="abs" style="left:880px;top:354px" width="10" height="7" viewBox="0 0 10 7"><path d="M1.800 5.100l2.900-2.900 2.900 2.900" fill="none" stroke="#f0f0f0" stroke-width="1.500"/></svg>
<svg class="abs" style="left:880px;top:376px" width="10" height="7" viewBox="0 0 10 7"><path d="M1.800 1.600l2.900 2.900 2.900-2.900" fill="none" stroke="#f0f0f0" stroke-width="1.500"/></svg>
<div class="abs" style="left:873.500px;top:390.500px;width:21.500px;height:1px;background:#454545"></div>
<svg class="abs" style="left:879px;top:398px" width="13" height="13" viewBox="0 0 13 13"><path d="M10.500 4.300a4.600 4.600 0 1 0 .7 3.400" fill="none" stroke="#e4e4e4" stroke-width="1.350"/><path d="M11.400 1v3.700h-3.700" fill="none" stroke="#e4e4e4" stroke-width="1.350"/></svg>
<svg class="abs" style="left:879px;top:421px" width="13" height="13" viewBox="0 0 13 13"><path d="M2.300 1.300h5.400l2.700 2.700v6.500c0 .8-.4 1.200-1.200 1.200h-6.900c-.8 0-1.200-.4-1.200-1.200v-8c0-.8.400-1.200 1.200-1.200z" fill="none" stroke="#e0e0e0" stroke-width="1.200"/><path d="M3.500 4.200c1.700-1.300 3.300-.3 2.400 1.200-.7 1.100-.5 2 .7 2 1 0 1.400.8.900 2.100" fill="none" stroke="#e0e0e0" stroke-width="1"/><path d="M3.700 7.200v2.400h2M8 3.400v2" fill="none" stroke="#e0e0e0" stroke-width=".9"/></svg>
<svg class="abs" style="left:890px;top:432.500px" width="4" height="4" viewBox="0 0 4 4"><path d="M3.600 0.400v3.200h-3.200z" fill="#d8d8d8"/></svg>
<svg class="abs" style="left:879px;top:446px" width="13" height="12" viewBox="0 0 13 12"><circle cx="5.200" cy="5" r="3.900" fill="none" stroke="#e4e4e4" stroke-width="1.200"/><path d="M8 7.900l3.500 3.300" stroke="#e4e4e4" stroke-width="1.400"/><path d="M3.200 5h4M5.200 3v4" stroke="#e4e4e4" stroke-width="1.050"/></svg>
<svg class="abs" style="left:879px;top:469px" width="13" height="12" viewBox="0 0 13 12"><circle cx="5.200" cy="5" r="3.900" fill="none" stroke="#e4e4e4" stroke-width="1.200"/><path d="M8 7.900l3.500 3.300" stroke="#e4e4e4" stroke-width="1.400"/><path d="M3.200 5h4" stroke="#e4e4e4" stroke-width="1.050"/></svg>

<div id="taskbar"></div>
<div id="search"></div>

<!-- taskbar contents -->
<svg class="abs" style="left:5.800px;top:490.600px" width="11.200" height="10.800" viewBox="0 0 112 108"><path d="M0 15l46-6v42h-46zM52 8l60-8v51h-60zM0 57h46v42l-46-6zM52 57h60v51l-60-8z" fill="#fff"/></svg>
<svg class="abs" style="left:31px;top:489.500px" width="13" height="12" viewBox="0 0 13 12"><circle cx="7.700" cy="4.500" r="3.300" fill="none" stroke="#dadada" stroke-width="1.100"/><path d="M5.300 7l-4.400 4.300" stroke="#dadada" stroke-width="1.200"/></svg>
<div class="t" style="left:50.600px;top:492.300px;font-size:9px;color:#dcdcdc">Pesquisa</div>
<div class="abs" style="left:198.3px;top:504.400px;width:18.4px;height:1.600px;background:#78b6e8"></div><div class="abs" style="left:247.0px;top:504.400px;width:17.7px;height:1.600px;background:#78b6e8"></div><div class="abs" style="left:296.0px;top:504.400px;width:18.0px;height:1.600px;background:#78b6e8"></div><div class="abs" style="left:320.0px;top:504.400px;width:18.0px;height:1.600px;background:#78b6e8"></div><div class="abs" style="left:393.0px;top:504.400px;width:18.3px;height:1.600px;background:#78b6e8"></div><div class="abs" style="left:466.3px;top:504.400px;width:18.7px;height:1.600px;background:#78b6e8"></div><div class="abs" style="left:515.3px;top:504.400px;width:18.0px;height:1.600px;background:#78b6e8"></div><div class="abs" style="left:539.3px;top:504.400px;width:18.7px;height:1.600px;background:#78b6e8"></div>
<div class="abs" style="left:561px;top:486px;width:24px;height:20px;background:#4a5860"></div>
<div class="abs" style="left:561.0px;top:504.400px;width:24.0px;height:1.600px;background:#9ccaf2"></div>
<!-- folder -->
<svg class="abs" style="left:201.600px;top:490.600px" width="12" height="10.400" viewBox="0 0 12 10.400"><path d="M0.400 1.400c0-.5.300-.8.800-.8h2.900l1 1.200h5.700c.5 0 .8.300.8.800v6.600h-11.200z" fill="#f3c94f"/><path d="M0.400 3.300h11.200v6.200c0 .4-.2.600-.6.600h-10c-.4 0-.6-.2-.6-.6z" fill="#f7d974"/><path d="M2.300 6.200h7.400v3.900h-7.400z" fill="#3f8fdc"/><path d="M3.700 7.600h4.600v2.500h-4.600z" fill="#9ed0f5"/></svg>
<svg class="abs" style="left:225.9px;top:490px" width="11.600" height="11.600" viewBox="-5.800 -5.800 11.600 11.600"><circle r="5.500" fill="#e8453c"/><path d="M-4.760 2.750A5.500 5.500 0 0 1 -4.760 -2.750L0 0z M-4.760 2.750 A5.500 5.500 0 0 0 0.960 5.420 L0 0z" fill="#34a853"/><path d="M0.960 5.420A5.500 5.500 0 0 0 4.760 -2.750L0 -1.500 0 0z" fill="#f9bc15"/><path d="M-4.760 -2.750A5.500 5.500 0 0 1 4.760 -2.750L0 -2.750z" fill="#e8453c"/><circle r="2.700" fill="#f4f4f4"/><circle r="2.050" fill="#4285f4"/><circle cx="3" cy="3.300" r="2.100" fill="#2a2420"/><circle cx="3" cy="2.700" r=".75" fill="#d8c8b0"/><path d="M1.700 4.700c.2-1.300 2.400-1.300 2.600 0z" fill="#d8c8b0"/></svg><svg class="abs" style="left:250.3px;top:490px" width="11.600" height="11.600" viewBox="-5.800 -5.800 11.600 11.600"><circle r="5.500" fill="#e8453c"/><path d="M-4.760 2.750A5.500 5.500 0 0 1 -4.760 -2.750L0 0z M-4.760 2.750 A5.500 5.500 0 0 0 0.960 5.420 L0 0z" fill="#34a853"/><path d="M0.960 5.420A5.500 5.500 0 0 0 4.760 -2.750L0 -1.500 0 0z" fill="#f9bc15"/><path d="M-4.760 -2.750A5.500 5.500 0 0 1 4.760 -2.750L0 -2.750z" fill="#e8453c"/><circle r="2.700" fill="#f4f4f4"/><circle r="2.050" fill="#4285f4"/><circle cx="3" cy="3.300" r="2.100" fill="#2a2420"/><circle cx="3" cy="2.700" r=".75" fill="#d8c8b0"/><path d="M1.700 4.700c.2-1.300 2.400-1.300 2.600 0z" fill="#d8c8b0"/></svg><svg class="abs" style="left:274.7px;top:490px" width="11.600" height="11.600" viewBox="-5.800 -5.800 11.600 11.600"><circle r="5.500" fill="#e8453c"/><path d="M-4.760 2.750A5.500 5.500 0 0 1 -4.760 -2.750L0 0z M-4.760 2.750 A5.500 5.500 0 0 0 0.960 5.420 L0 0z" fill="#34a853"/><path d="M0.960 5.420A5.500 5.500 0 0 0 4.760 -2.750L0 -1.500 0 0z" fill="#f9bc15"/><path d="M-4.760 -2.750A5.500 5.500 0 0 1 4.760 -2.750L0 -2.750z" fill="#e8453c"/><circle r="2.700" fill="#f4f4f4"/><circle r="2.050" fill="#4285f4"/><circle cx="3" cy="3.300" r="2.100" fill="#2a2420"/><circle cx="3" cy="2.700" r=".75" fill="#d8c8b0"/><path d="M1.700 4.700c.2-1.300 2.400-1.300 2.600 0z" fill="#d8c8b0"/></svg>
<!-- outlook -->
<svg class="abs" style="left:299.400px;top:490.500px" width="11" height="10" viewBox="0 0 11 10"><rect x="3.400" y="0.300" width="7.300" height="9.200" rx=".8" fill="#1b8fe6"/><rect x="7" y="0.300" width="3.700" height="4.400" fill="#4fc0f5"/><rect x="3.400" y="5" width="7.300" height="4.500" fill="#0f68c0"/><rect x="0.300" y="2" width="6.600" height="6.600" rx=".8" fill="#0f74d0"/><ellipse cx="3.600" cy="5.300" rx="1.700" ry="1.900" fill="none" stroke="#fff" stroke-width="1.100"/></svg>
<!-- word -->
<svg class="abs" style="left:323.800px;top:490.500px" width="11" height="10" viewBox="0 0 11 10"><rect x="3.200" y="0.300" width="7.500" height="9.200" rx=".8" fill="#3d8ee0"/><rect x="3.200" y="2.600" width="7.500" height="2.300" fill="#2b7cd3"/><rect x="3.200" y="4.900" width="7.500" height="2.300" fill="#1f66c4"/><rect x="3.200" y="7.200" width="7.500" height="2.300" fill="#134a9e"/><rect x="0.300" y="2" width="6.600" height="6.600" rx=".8" fill="#1c5fc0"/><path d="M1.500 3.700l.9 3.300.9-3 .6 0 .9 3 .9-3.300" fill="none" stroke="#fff" stroke-width=".85" stroke-linejoin="round"/></svg>
<!-- scanner -->
<svg class="abs" style="left:348.600px;top:490.900px" width="10.800" height="9.400" viewBox="0 0 10.800 9.400"><rect width="10.800" height="9.400" rx=".8" fill="#3b3fc0"/><path d="M2.200 1.700h6.400" stroke="#fff" stroke-width="1"/><path d="M3.600 3.300h3.600l1.700 3.800h-7z" fill="none" stroke="#fff" stroke-width="1"/><path d="M1.700 7.600h7.400" stroke="#fff" stroke-width="1.100"/></svg>
<!-- CS -->
<div class="t" style="left:373.200px;top:491.900px;font-size:7px;font-weight:bold;color:#f2f2f2;letter-spacing:-.2px">CS</div>
<div class="abs" style="left:372.800px;top:498.500px;width:9.300px;height:1.200px;background:#2fc68a"></div>
<!-- calculator -->
<svg class="abs" style="left:398.500px;top:490.600px" width="8.400" height="10.200" viewBox="0 0 8.400 10.200"><rect width="8.400" height="10.200" rx=".7" fill="#7f8e96"/><rect x="0.900" y="0.900" width="6.600" height="2.100" fill="#5fb5a8"/><g fill="#e8ecee"><rect x="0.900" y="3.900" width="1.700" height="1.500"/><rect x="3.300" y="3.900" width="1.700" height="1.500"/><rect x="5.700" y="3.900" width="1.700" height="1.500"/><rect x="0.900" y="6" width="1.700" height="1.500"/><rect x="3.300" y="6" width="1.700" height="1.500"/><rect x="5.700" y="6" width="1.700" height="1.500"/><rect x="0.900" y="8.100" width="1.700" height="1.500"/><rect x="3.300" y="8.100" width="1.700" height="1.500"/><rect x="5.700" y="8.100" width="1.700" height="1.500"/></g></svg>
<!-- clapper -->
<svg class="abs" style="left:420.800px;top:491.200px" width="11.800" height="9.400" viewBox="0 0 11.800 9.400"><defs><linearGradient id="gcl" x1="0" y1="0" x2="0" y2="1"><stop offset="0" stop-color="#c884f8"/><stop offset="1" stop-color="#7a3fe6"/></linearGradient></defs><path d="M0.300 3l10.400-2.800.5 1.900-10.400 2.800z" fill="#b06cf2"/><rect x="0.500" y="3.700" width="11" height="5.500" rx=".7" fill="url(#gcl)"/></svg>
<!-- diamond -->
<svg class="abs" style="left:445.200px;top:489.800px" width="11.600" height="11.600" viewBox="-5.800 -5.800 11.600 11.600"><path d="M0 -5.500L5.500 0 0 5.500 -5.500 0z" fill="#4f55d8"/><path d="M0 -3.600L3.600 0 0 3.600 -3.600 0z" fill="#7f84f0"/><path d="M-1 -1.700L1.800 0 -1 1.700z" fill="#fff"/></svg>
<!-- whatsapp -->
<svg class="abs" style="left:469.800px;top:489.800px" width="11.600" height="11.600" viewBox="-5.800 -5.800 11.600 11.600"><circle r="4.800" fill="#1c3a36" stroke="#2cc866" stroke-width="1.300"/><path d="M-5.300 5.300l.9-2.700 1.800 1.800z" fill="#2cc866"/><path d="M-2.100 -2.500c-.6.600-.3 2 1.100 3.400s2.800 1.700 3.400 1.100l.4-.7-1.300-.9-.7.500c-.5-.2-1.500-1.200-1.700-1.700l.5-.7-.9-1.300z" fill="#2cc866"/></svg>
<!-- teams -->
<svg class="abs" style="left:494.200px;top:490px" width="11.600" height="11.200" viewBox="0 0 11.600 11.200"><circle cx="6.500" cy="2.300" r="1.900" fill="#6a72d8"/><circle cx="9.800" cy="3" r="1.300" fill="#5059c9"/><path d="M8.300 4.800h2.600c.4 0 .6.200.6.600v2.900c0 1.500-2 2-3.200 1.400z" fill="#5059c9"/><path d="M3.800 4.800h5c.4 0 .6.200.6.600v3.300c0 3-5.600 3-5.600 0z" fill="#7b83eb"/><rect x="0.300" y="3.400" width="5.900" height="5.900" rx=".7" fill="#4b53bc"/><path d="M1.900 5.100h2.700M3.250 5.100v3" stroke="#fff" stroke-width=".95"/></svg>
<!-- spotify -->
<svg class="abs" style="left:518.600px;top:489.800px" width="11.600" height="11.600" viewBox="-5.800 -5.800 11.600 11.600"><circle r="5.500" fill="#22cc5c"/><g fill="none" stroke="#16351f" stroke-linecap="round"><path d="M-3.200 -1.500c2.200-.7 4.700-.4 6.500.6" stroke-width="1.100"/><path d="M-2.800 .4c1.900-.5 3.800-.3 5.300.6" stroke-width=".95"/><path d="M-2.400 2.100c1.500-.4 2.900-.2 4.100.5" stroke-width=".8"/></g></svg>
<!-- photos -->
<svg class="abs" style="left:543.800px;top:490.900px" width="10.200" height="9.600" viewBox="0 0 10.200 9.600"><rect width="10.200" height="9.600" rx="1" fill="#1f7ae8"/><path d="M0 7.800l3.600-4.400 3 3.600 1.200-1.300 2.400 2.600v.3c0 .6-.4 1-1 1h-8.200c-.6 0-1-.4-1-1z" fill="#58c4f8"/><circle cx="7.800" cy="2.300" r="1" fill="#eaf6ff"/></svg>
<!-- acrobat -->
<svg class="abs" style="left:567.800px;top:490.600px" width="10.600" height="10" viewBox="0 0 10.600 10"><rect width="10.600" height="10" rx=".8" fill="#b5161b"/><path d="M2 8c.3-1.200 2.300-2.300 4.200-2.500 1.400-.2 2.600.2 2.500.8-.1.600-1.500.3-2.700-.9-1.200-1.100-1.900-2.700-1.600-3.300.3-.6 1-.2.900.9-.1 1.200-.8 3-1.700 4.200-.7.900-1.700 1.500-1.600.8z" fill="none" stroke="#fff" stroke-width=".9" stroke-linejoin="round"/></svg>

<!-- tray -->
<svg class="abs" style="left:810.500px;top:492.500px" width="10" height="7" viewBox="0 0 10 7"><path d="M0.900 5.600l4.100-4.100 4.100 4.100" fill="none" stroke="#f0f0f0" stroke-width="1.050"/></svg>
<svg class="abs" style="left:825.500px;top:491.500px" width="12" height="9" viewBox="0 0 12 9"><rect x="2.600" y="2.300" width="7.600" height="4.800" fill="none" stroke="#f0f0f0" stroke-width=".95"/><path d="M10.500 3.700h.9v2h-.9" fill="none" stroke="#f0f0f0" stroke-width=".8"/><rect x="0.600" y="0.700" width="2.600" height="2.600" fill="#1c2b46" stroke="#f0f0f0" stroke-width=".85"/><path d="M1.900 3.300v2.200c0 1.200 1 1.800 2 1.800" fill="none" stroke="#f0f0f0" stroke-width=".8"/></svg>
<svg class="abs" style="left:842px;top:490.800px" width="11.500" height="11" viewBox="0 0 11.500 11"><path d="M5 .5c1.300.9 2.800 1.300 4.300 1.300 0 3.700-1 6.600-4.300 8.200-3.300-1.600-4.300-4.500-4.300-8.200 1.500 0 3-.4 4.300-1.300z" fill="#f4f4f4"/><path d="M5 .5v9.500M.8 5h8.400" stroke="#9aa4b0" stroke-width=".7"/><circle cx="8.200" cy="8" r="2.600" fill="#21a544"/><path d="M6.900 8l1 1 1.700-1.900" fill="none" stroke="#fff" stroke-width=".85"/></svg>
<svg class="abs" style="left:859px;top:491.500px" width="10" height="9.500" viewBox="0 0 10 9.500"><g fill="none" stroke="#c8ccd4" stroke-width="1"><path d="M0.800 8.700a7.900 7.900 0 0 1 7.900-7.900"/><path d="M3 8.700a5.700 5.700 0 0 1 5.700-5.700"/><path d="M5.200 8.700a3.500 3.500 0 0 1 3.500-3.500"/></g><circle cx="8.300" cy="8.200" r="1" fill="#f4f4f4"/></svg>
<div class="t" style="left:875px;top:492.200px;font-size:7.200px;color:#f4f4f4">15:18</div>
<div class="abs" style="left:897px;top:486px;width:1px;height:20px;background:#4a5568"></div>

</body>
</html>
